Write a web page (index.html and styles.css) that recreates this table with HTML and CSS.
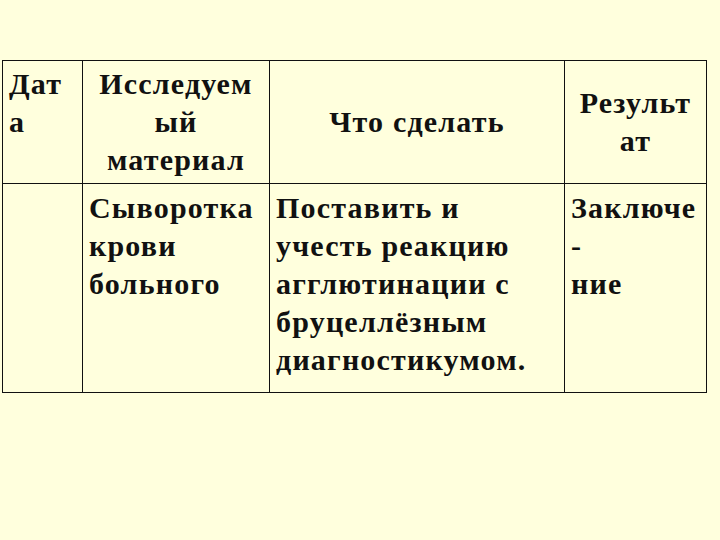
FILE: index.html
```html
<!DOCTYPE html>
<html lang="ru">
<head>
<meta charset="utf-8">
<title>Таблица</title>
<link rel="stylesheet" href="styles.css">
</head>
<body>
<div class="page">
  <table class="grid">
    <colgroup>
      <col class="c1">
      <col class="c2">
      <col class="c3">
      <col class="c4">
    </colgroup>
    <tr class="head">
      <td class="top left">Дат<br>а</td>
      <td class="top center">Исследуем<br>ый<br>материал</td>
      <td class="middle center">Что сделать</td>
      <td class="middle center">Результ<br>ат</td>
    </tr>
    <tr class="body">
      <td class="top left"></td>
      <td class="top left">Сыворотка<br>крови<br>больного</td>
      <td class="top left">Поставить и<br>учесть реакцию<br>агглютинации с<br>бруцеллёзным<br>диагностикумом.</td>
      <td class="top left">Заключе<br>-<br>ние</td>
    </tr>
  </table>
</div>
</body>
</html>
```
FILE: styles.css
```css
html, body {
  margin: 0;
  padding: 0;
  background: #ffffdd;
}
.page {
  width: 720px;
  height: 540px;
  padding: 60px 0 0 2px;
  box-sizing: border-box;
}
.grid {
  border-collapse: collapse;
  table-layout: fixed;
  width: 704px;
  font-family: "Liberation Serif", "Times New Roman", serif;
  font-weight: bold;
  font-size: 30px;
  line-height: 38px;
  letter-spacing: 1.2px;
  color: #111;
}
.c1 { width: 80px; }
.c2 { width: 187px; }
.c3 { width: 295px; }
.c4 { width: 142px; }
.grid td {
  border: 1.5px solid #111;
  padding: 4px 6px;
  white-space: nowrap;
  overflow: hidden;
}
.head td { height: 114px; }
.body td { height: 190px; padding-top: 5px; padding-bottom: 13px; }
.top { vertical-align: top; }
.middle { vertical-align: middle; }
.left { text-align: left; }
.center { text-align: center; }
.body td.left { padding-left: 6px; }
```
